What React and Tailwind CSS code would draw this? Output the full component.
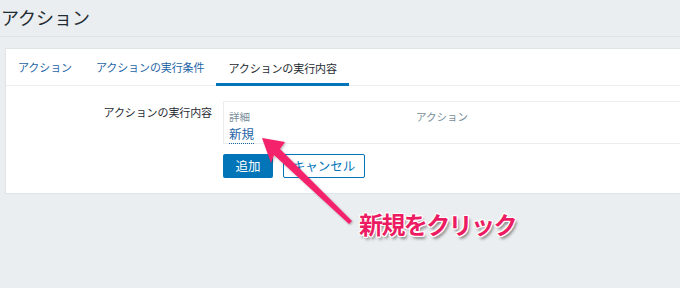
import React from "react";

const font = { fontFamily: '"Noto Sans CJK JP", "Noto Sans", sans-serif' };

export default function App() {
  return (
    <div className="relative w-[680px] h-[288px] overflow-hidden bg-[#ebeef0]" style={font}>
      <div className="h-[37px] border-b border-[#dfe4e7] pl-[1px] pt-[4px]">
        <h1 className="text-[18px] leading-[26px] text-[#1f2c33] font-normal">アクション</h1>
      </div>
      <div className="mt-[11px] ml-[5px] w-[700px] bg-white border border-[#dfe4e7]">
        <div className="flex h-[37px] border-b border-[#ebeef0] text-[11px] leading-[16px] tracking-[-0.1px]">
          <div className="px-3 flex items-center text-[#1f65a6]">アクション</div>
          <div className="px-3 flex items-center text-[#1f65a6]">アクションの実行条件</div>
          <div className="px-3 flex items-center text-[#1f2c33] border-b-[3px] border-[#0275b8] pt-[3px] -mb-[1px]">アクションの実行内容</div>
        </div>
        <div className="flex pt-[15px] pb-[15px]">
          <div className="w-[206px] text-right text-[11px] leading-[16px] tracking-[-0.1px] text-[#1f2c33] pt-[3px]">アクションの実行内容</div>
          <div className="ml-[11px] flex-1">
            <div className="border border-[#ebeef0] h-[43px] pl-[5px]">
              <div className="flex pt-[8px] text-[10.5px] leading-[14px] text-[#768d99]">
                <div className="w-[187px]">詳細</div>
                <div>アクション</div>
              </div>
              <div className="pt-[2px] text-[12.5px] leading-[16px]">
                <span className="text-[#1f65a6] border-b border-dotted border-[#1f65a6]">新規</span>
              </div>
            </div>
            <div className="flex mt-[10px] gap-[10px]">
              <button className="w-[50px] h-[24px] rounded-[2px] bg-[#0275b8] text-white text-[12.5px] leading-[16px] flex items-center justify-center">追加</button>
              <button className="w-[82px] h-[24px] rounded-[2px] border border-[#0275b8] bg-white text-[#0275b8] text-[12.5px] leading-[16px] flex items-center justify-center">キャンセル</button>
            </div>
          </div>
        </div>
      </div>
      <svg className="absolute left-0 top-0" width="680" height="288" viewBox="0 0 680 288">
        <defs>
          <filter id="sh" x="-20%" y="-20%" width="140%" height="140%">
            <feDropShadow dx="1" dy="1" stdDeviation="1" floodColor="#000" floodOpacity="0.3" />
          </filter>
        </defs>
        <polygon
          points="262,138 285,142 280,149 352,221 349,224 274,155 271,163"
          fill="#f4206b"
          filter="url(#sh)"
        />
      </svg>
      <div
        className="absolute left-[359px] top-[207px] text-[24px] leading-[34px] font-bold text-[#ec1c63] tracking-[-1.6px]"
        style={{
          textShadow:
            "-1px -1px 0 #fff, 1px -1px 0 #fff, -1px 1px 0 #fff, 1px 1px 0 #fff, 0 -1px 0 #fff, 0 1px 0 #fff, -1px 0 0 #fff, 1px 0 0 #fff, 2px 3px 3px rgba(0,0,0,0.45)",
        }}
      >
        新規をクリック
      </div>
    </div>
  );
}
